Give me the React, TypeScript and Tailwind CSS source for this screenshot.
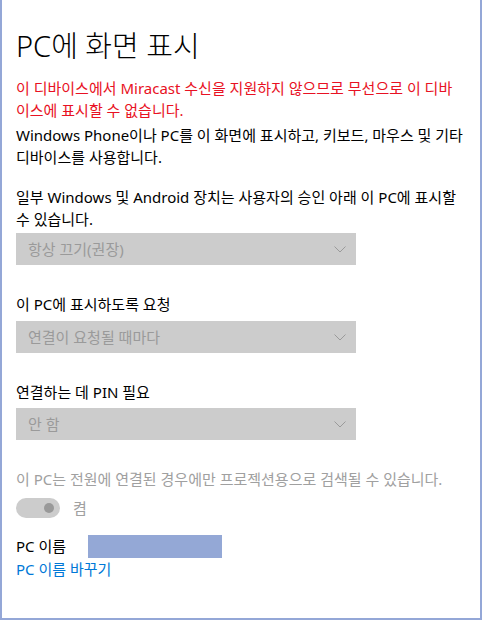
import React from 'react';

const font = { fontFamily: '"Noto Sans", "Noto Sans CJK KR", sans-serif' };

function Select({ label }: { label: string }) {
  return (
    <div className="mt-[3px] flex h-8 w-[340px] items-center justify-between bg-[#cccccc] pl-3 pr-[10px] text-[15px] text-[#9a9a9a]">
      <span>{label}</span>
      <svg width="12" height="7" viewBox="0 0 12 7" fill="none">
        <path d="M0.5 0.5 L6 6 L11.5 0.5" stroke="#9a9a9a" strokeWidth="1" />
      </svg>
    </div>
  );
}

export default function App() {
  return (
    <div
      style={font}
      className="min-h-[620px] w-[482px] border-x-2 border-b-2 border-[#94a7d7] bg-white pl-[14px] pr-[14px] pt-[26px] text-black"
    >
      <h1 className="text-[29px] font-light leading-[40px]">PC에 화면 표시</h1>

      {/* 원본 줄바꿈 위치("디바 / 이스에")에 맞추려고 오른쪽을 조금 좁힘 */}
      <p className="mt-[11px] pr-[8px] text-[15px] leading-[22px] text-[#e81123]">
        이 디바이스에서 Miracast 수신을 지원하지 않으므로 무선으로 이 디바이스에 표시할 수 없습니다.
      </p>

      <p className="mt-[3px] text-[15px] leading-[22px]">
        Windows Phone이나 PC를 이 화면에 표시하고, 키보드, 마우스 및 기타 디바이스를 사용합니다.
      </p>

      <p className="mt-[18px] text-[15px] leading-[22px]">
        일부 Windows 및 Android 장치는 사용자의 승인 아래 이 PC에 표시할 수 있습니다.
      </p>
      <Select label="항상 끄기(권장)" />

      <p className="mt-[28px] text-[15px] leading-[22px]">이 PC에 표시하도록 요청</p>
      <div className="h-[3px]" />
      <Select label="연결이 요청될 때마다" />

      <p className="mt-[28px] text-[15px] leading-[22px]">연결하는 데 PIN 필요</p>
      <div className="h-[2px]" />
      <Select label="안 함" />

      <p className="mt-[28px] text-[15px] leading-[22px] text-[#a0a0a0]">
        이 PC는 전원에 연결된 경우에만 프로젝션용으로 검색될 수 있습니다.
      </p>

      <div className="mt-[7px] flex items-center gap-[13px]">
        <div className="flex h-5 w-11 items-center justify-end rounded-full bg-[#cccccc] pr-[6px]">
          <div className="h-[10px] w-[10px] rounded-full bg-[#999999]" />
        </div>
        <span className="text-[15px] text-[#a0a0a0]">켬</span>
      </div>

      <div className="mt-[15px] flex items-center">
        <span className="w-[72px] text-[15px] leading-[22px]">PC 이름</span>
        <div className="h-[23px] w-[134px] bg-[#94a8d6]" />
      </div>
      <a className="block text-[15px] leading-[22px] text-[#0078d7]">PC 이름 바꾸기</a>
    </div>
  );
}
